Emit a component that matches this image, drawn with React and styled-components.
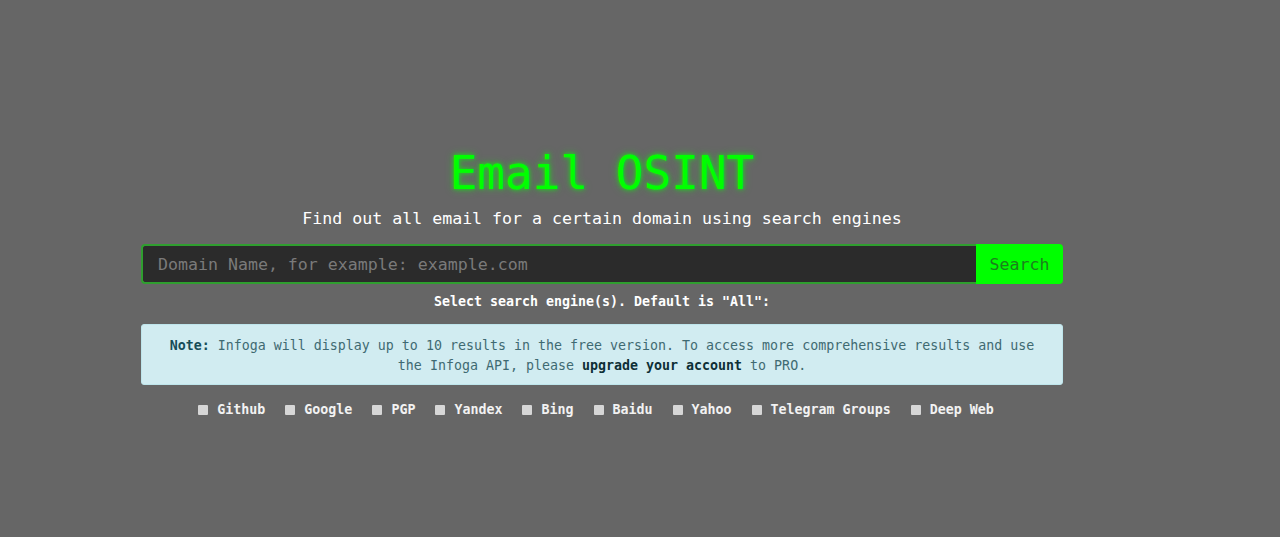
import styled, { createGlobalStyle } from 'styled-components'

const GlobalStyle = createGlobalStyle`
  html, body {
    margin: 0;
    padding: 0;
    background: #666666;
    font-family: "DejaVu Sans Mono", "Liberation Mono", monospace;
  }
`

const Page = styled.div`
  min-height: 537px;
  display: flex;
  justify-content: flex-start;
  padding-left: 141px;
`

const Container = styled.div`
  width: 922px;
  display: flex;
  flex-direction: column;
  align-items: center;
  padding-top: 146px;
`

const Title = styled.h1`
  margin: 0;
  font-size: 46px;
  line-height: 55px;
  font-weight: normal;
  color: #00ff00;
  text-shadow: 0 0 4px rgba(0, 255, 0, 0.8), 0 0 10px rgba(0, 255, 0, 0.4);
`

const Subtitle = styled.p`
  margin: 6px 0 0;
  font-size: 16.6px;
  line-height: 24px;
  color: #ffffff;
`

const SearchBar = styled.form`
  margin-top: 13px;
  width: 100%;
  display: flex;
  height: 40px;
`

const Input = styled.input`
  flex: 1;
  min-width: 0;
  box-sizing: border-box;
  height: 40px;
  background: #2b2b2b;
  border: 2px solid #2f9e2f;
  border-right: none;
  border-radius: 4px 0 0 4px;
  padding: 0 15px;
  font-family: inherit;
  font-size: 16.6px;
  color: #ddd;
  outline: none;
  &::placeholder {
    color: #7a7a7a;
  }
`

const Button = styled.button`
  width: 87px;
  height: 40px;
  border: none;
  border-radius: 0 4px 4px 0;
  background: #00ff00;
  color: #1c7f1c;
  font-family: inherit;
  font-size: 16.6px;
  cursor: pointer;
  padding: 0;
`

const Hint = styled.p`
  margin: 8px 0 0;
  font-size: 13.3px;
  line-height: 20px;
  color: #ffffff;
  font-weight: bold;
`

const Note = styled.div`
  margin-top: 12px;
  width: 100%;
  box-sizing: border-box;
  height: 61px;
  padding: 11px 20px 9px;
  background: #d1ecf1;
  border: 1px solid #bee5eb;
  border-radius: 3px;
  color: #3f6a72;
  font-size: 13.3px;
  line-height: 20px;
  text-align: center;
`

const Strong = styled.strong`
  color: ${p => (p.$label ? '#164d58' : '#0e2f36')};
`

const Engines = styled.div`
  margin-top: 15px;
  display: flex;
  justify-content: center;
  gap: 20px;
  padding-right: 12px;
`

const Engine = styled.label`
  display: flex;
  align-items: center;
  gap: 9px;
  font-size: 13.3px;
  line-height: 20px;
  color: #f2f2f2;
  font-weight: bold;
  cursor: pointer;
`

const Box = styled.input`
  appearance: none;
  margin: 0;
  width: 10px;
  height: 10px;
  background: #d6d6d6;
  border-radius: 1px;
`

const engines = ['Github', 'Google', 'PGP', 'Yandex', 'Bing', 'Baidu', 'Yahoo', 'Telegram Groups', 'Deep Web']

export default function App() {
  return (
    <>
      <GlobalStyle />
      <Page>
        <Container>
          <Title>Email OSINT</Title>
          <Subtitle>Find out all email for a certain domain using search engines</Subtitle>
          <SearchBar onSubmit={e => e.preventDefault()}>
            <Input placeholder='Domain Name, for example: example.com' />
            <Button type='submit'>Search</Button>
          </SearchBar>
          <Hint>Select search engine(s). Default is "All":</Hint>
          <Note>
            <Strong $label>Note:</Strong> Infoga will display up to 10 results in the free version. To access more comprehensive results and use the Infoga API, please <Strong>upgrade your account</Strong> to PRO.
          </Note>
          <Engines>
            {engines.map(name => (
              <Engine key={name}>
                <Box type='checkbox' />
                {name}
              </Engine>
            ))}
          </Engines>
        </Container>
      </Page>
    </>
  )
}
